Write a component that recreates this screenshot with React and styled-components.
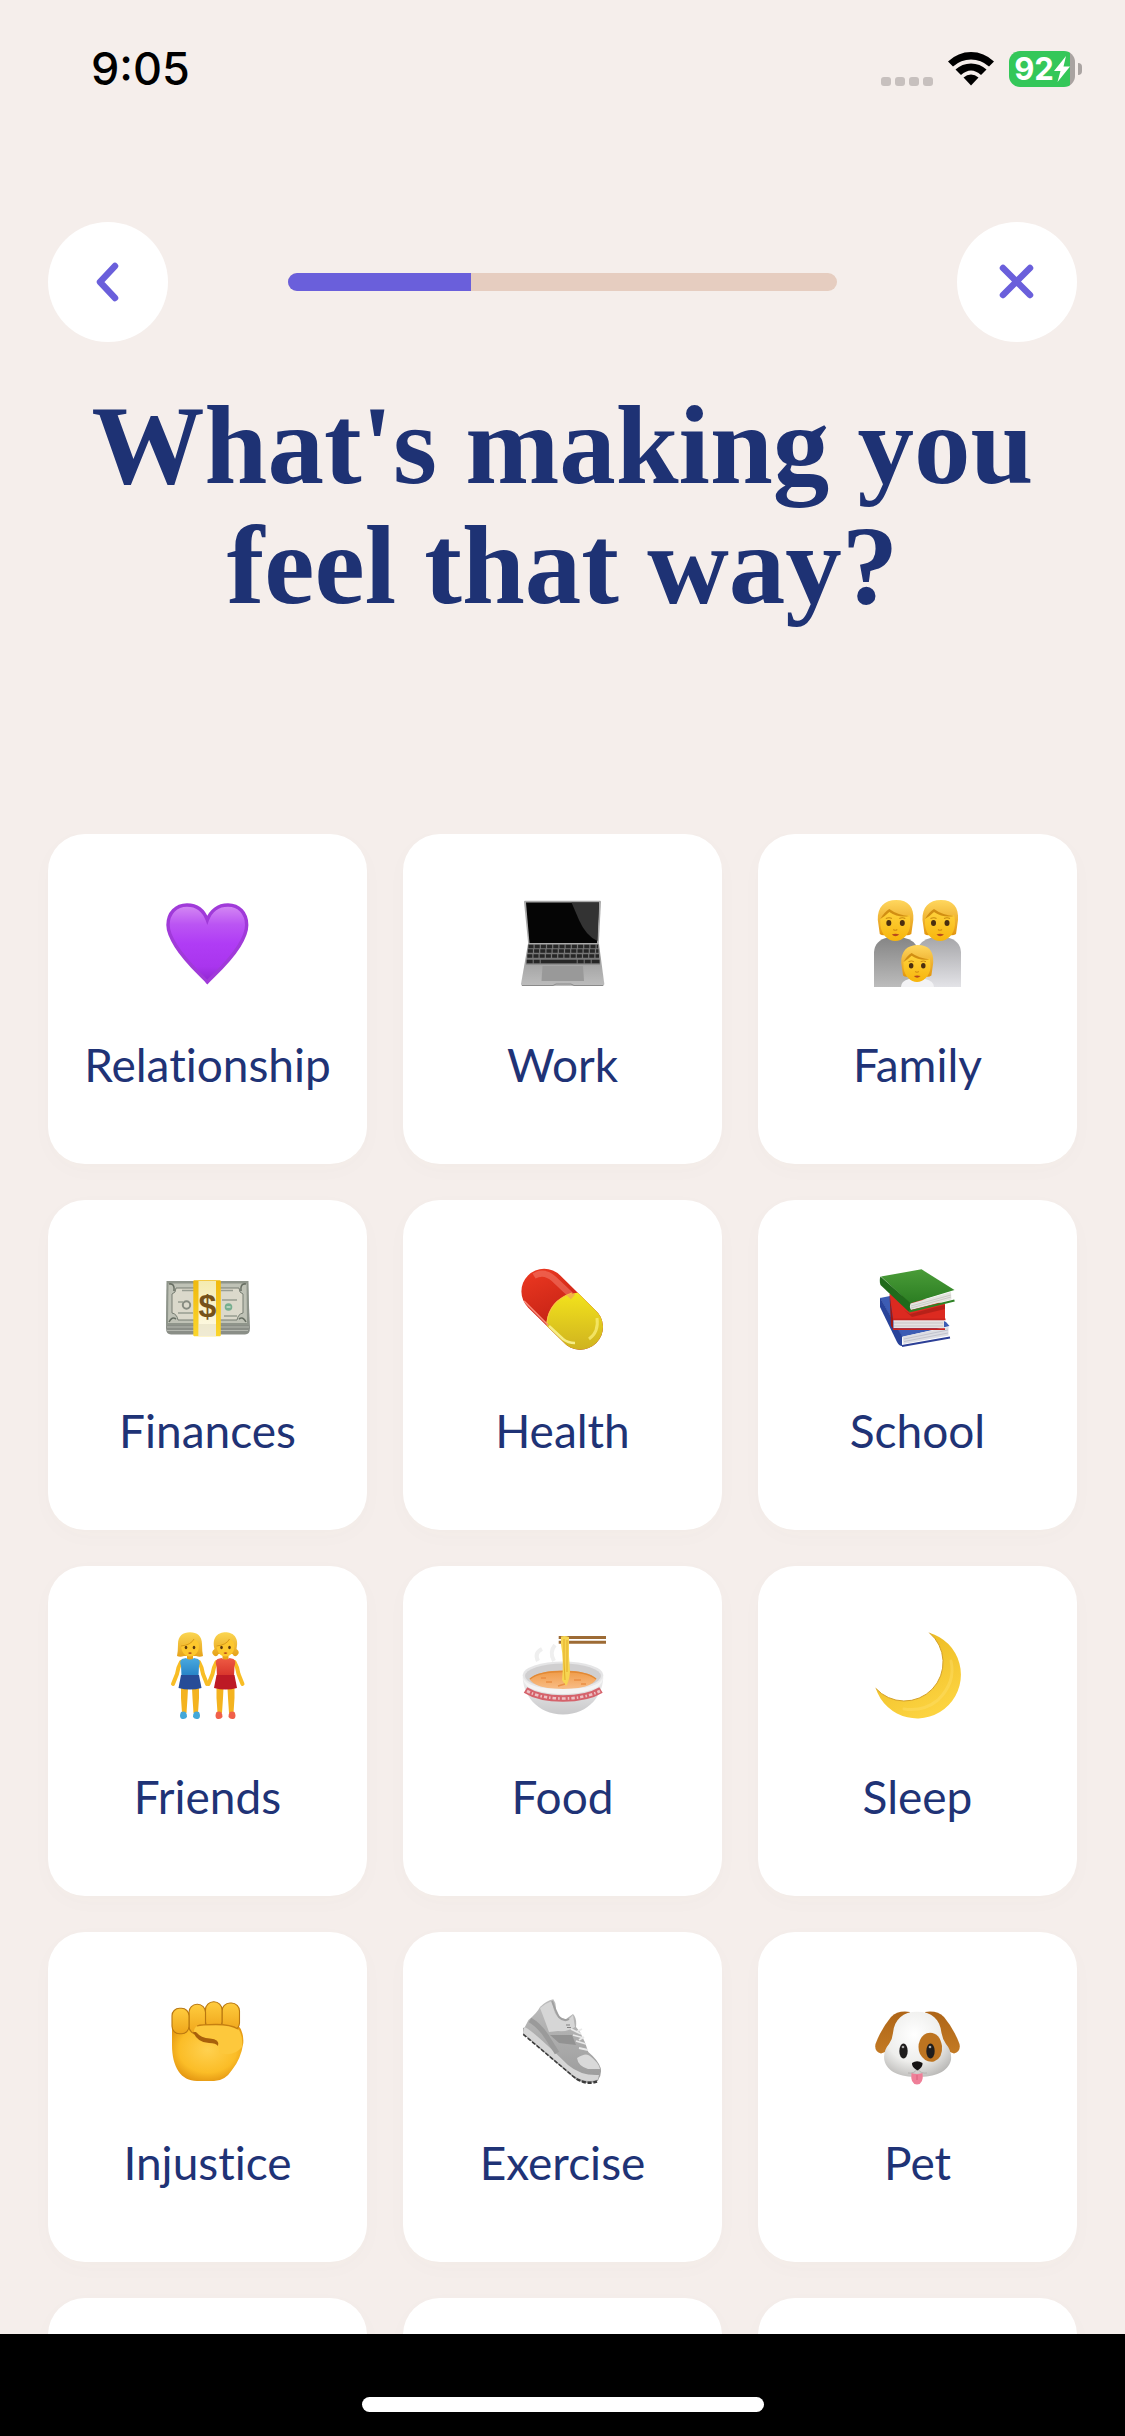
import React from "react";
import styled, { createGlobalStyle } from "styled-components";

const GlobalStyle = createGlobalStyle`
  * {
    box-sizing: border-box;
  }

  body {
    margin: 0;
    background: #f5eeeb;
  }
`;

const Screen = styled.div`
  display: flex;
  flex-direction: column;
  height: 100vh;
  background: #f5eeeb;
  color: #1f3376;
  font-family: Lato, sans-serif;
`;

const StatusBar = styled.div`
  display: flex;
  flex: none;
  align-items: center;
  justify-content: space-between;
  height: 138px;
  padding: 0 43px 0 91px;
  color: #000;
  font-family: Inter, sans-serif;
`;

const Time = styled.span`
  font-size: 45px;
  font-weight: 500;
  line-height: 54px;
`;

const StatusIcons = styled.div`
  display: flex;
  align-items: center;
  gap: 15px;
`;

const Dots = styled.div`
  display: flex;
  gap: 4px;
  padding-top: 24px;
`;

const Dot = styled.span`
  width: 10px;
  height: 9px;
  border-radius: 3px;
  background: #c7c0be;
`;

const Battery = styled.div`
  display: flex;
  align-items: center;
  gap: 3px;
`;

const BatteryBody = styled.div`
  display: flex;
  align-items: center;
  justify-content: center;
  width: 66px;
  height: 36px;
  border-radius: 11px;
  background: linear-gradient(90deg, #34c759 61px, #a9a3a1 61px);
  color: #fff;
  font-size: 31px;
  font-weight: 700;
  line-height: 36px;
`;

const BatteryCap = styled.span`
  width: 4px;
  height: 12px;
  border-radius: 0 4px 4px 0;
  background: #aaa4a2;
`;

const NavBar = styled.header`
  display: flex;
  flex: none;
  align-items: center;
  gap: 120px;
  padding: 84px 48px 0;
`;

const RoundButton = styled.button`
  display: flex;
  flex: none;
  align-items: center;
  justify-content: center;
  width: 120px;
  height: 120px;
  padding: 0;
  border: none;
  border-radius: 50%;
  background: #fff;
  color: #6a5fdb;
  cursor: pointer;
`;

const Track = styled.div`
  flex: 1;
  height: 18px;
  border-radius: 9px;
  background: #e6cdc0;
  overflow: hidden;
`;

const Fill = styled.div`
  height: 100%;
  background: #6a5fdb;
`;

const Title = styled.h1`
  flex: none;
  max-width: 1029px;
  margin: 43px auto 209px;
  padding: 0 24px;
  font-family: "Liberation Serif", serif;
  font-size: 113px;
  font-weight: 700;
  line-height: 120px;
  text-align: center;
  color: #1e3274;
`;

const Scroller = styled.main`
  flex: 1;
  min-height: 0;
  overflow-y: auto;
  scrollbar-width: none;
`;

const Grid = styled.div`
  display: grid;
  grid-template-columns: repeat(3, 1fr);
  gap: 36px;
  padding: 0 48px 36px;
`;

const Card = styled.button`
  display: flex;
  flex-direction: column;
  align-items: center;
  gap: 48px;
  min-height: 330px;
  padding: 66px 0 0;
  border: none;
  border-radius: 37px;
  background: #fff;
  box-shadow: 0 6px 24px rgba(120, 80, 50, 0.02);
  color: inherit;
  font-family: inherit;
  cursor: pointer;
`;

const Emoji = styled.svg`
  display: block;
  width: 87px;
  height: 87px;
`;

const Label = styled.span`
  font-size: 46px;
  line-height: 60px;
  font-variant-ligatures: none;
`;

const HomeBar = styled.footer`
  display: flex;
  flex: none;
  align-items: flex-end;
  justify-content: center;
  height: 102px;
  padding-bottom: 24px;
  background: #000;
`;

const HomeIndicator = styled.span`
  width: 402px;
  height: 15px;
  border-radius: 8px;
  background: #fff;
`;

function Gradient({ id, from, to, x2 = 0, y2 = 1 }) {
  return (
    <linearGradient id={id} x1="0" y1="0" x2={x2} y2={y2}>
      <stop offset="0" stopColor={from} />
      <stop offset="1" stopColor={to} />
    </linearGradient>
  );
}

function Heart() {
  return (
    <>
      <defs>
        <linearGradient id="heart" x1="0" y1="0" x2="0" y2="1">
          <stop offset="0" stopColor="#d58bf3" />
          <stop offset="0.25" stopColor="#bb55f3" />
          <stop offset="0.5" stopColor="#b03cf5" />
          <stop offset="0.8" stopColor="#a935ee" />
          <stop offset="1" stopColor="#8f27cf" />
        </linearGradient>
      </defs>
      <path
        d="M43.3 82C36 74 22 62 12 46C7 38 4 32 4 25C4 13 12 5 23 5C33 5 40 11 43.300 20C46.600 11 54 5 64 5C75 5 82.700 13 82.700 25C82.700 32 80 38 75 46C65 62 51 74 43.300 82Z"
        fill="url(#heart)"
        stroke="#a03ad9"
        strokeWidth="3.4"
      />
    </>
  );
}

const keyRows = [46.5, 51, 56, 61.5];

function Laptop() {
  return (
    <>
      <defs>
        <Gradient id="lapBase" from="#8f8f8f" to="#bdbdbd" />
      </defs>
      <path d="M6 .7H81Q82 .7 82 2L79.700 45H9.300L5 2Q5 .7 6 .7Z" fill="#aaa" />
      <path d="M7 2.500H80L78 43H10.500Z" fill="#050505" />
      <path d="M52.500 2.500H80L78.500 41Q67 36 60 20Z" fill="#333" />
      <path d="M9 44H80L85.300 84Q85.300 86 83.500 86H4Q2 86 2 84Z" fill="url(#lapBase)" />
      <path d="M9.500 44.500H79.500L81 64.500H7Z" fill="#777" />
      {keyRows.map((y, i) => (
        <path
          key={y}
          d={`M${9.500 - i * 0.6} ${y}H${79 + i * 0.5}`}
          stroke="#262626"
          strokeWidth="3.6"
          strokeDasharray={i === 3 ? "6 1 6 1 36 1" : "5 1.200"}
        />
      ))}
      <path d="M23.500 66H64L65 81H22.500Z" fill="#999" />
      <path d="M3 85.500H34L37 84H52L55 85.500H84" stroke="#8a8a8a" fill="none" />
    </>
  );
}

function Face({ x, y, s = 1 }) {
  return (
    <g transform={`translate(${x} ${y}) scale(${s})`}>
      <path d="M-17.500 20C-18 7 -11 0 1 0C13 0 19 7 18 20L16 34Q13 36 10 35H-10Q-13 36 -15.500 34Z" fill="url(#hair)" />
      <path d="M-15 19Q-12 14 -4 11Q8 17 14 15Q15 18 15 25C14 35 7 41 0 41C-7 41 -14 35 -15 25Z" fill="url(#skin)" />
      <path d="M-6 9Q2 15 14 16Q3 18 -6 12Q-10 16 -15 19Q-11 12 -6 9Z" fill="#d18e13" />
      <ellipse cx="-6.500" cy="23" rx="2.500" ry="3" fill="#4a2e10" />
      <ellipse cx="7" cy="23" rx="2.500" ry="3" fill="#4a2e10" />
      <path d="M-9.500 18.500Q-6 17 -3.500 18.500M4 18.500Q7 17 10 18.500" stroke="#c98a12" strokeWidth="1.100" fill="none" />
      <path d="M-2 29.500Q0 31 2 29.500" stroke="#d28b10" strokeWidth="1.200" fill="none" />
      <path d="M-3.500 34.500Q0 33 4 34.500Q0 38 -3.500 34.500Z" fill="#b84a1c" />
    </g>
  );
}

function Family() {
  return (
    <>
      <defs>
        <Gradient id="hair" from="#ffd75e" to="#e2950f" />
        <Gradient id="skin" from="#ffd23c" to="#f7b50c" />
        <Gradient id="bodyL" from="#858585" to="#bcbcbc" />
        <Gradient id="bodyR" from="#a6a6a9" to="#e3e3e7" />
      </defs>
      <path d="M0 87V52Q1 40 14 37.500H29Q42 40 44 50V87Z" fill="url(#bodyL)" />
      <path d="M43 87V50Q46 40 58 37.500H73Q86 40 87 52V87Z" fill="url(#bodyR)" />
      <Face x={21.3} y={0} />
      <Face x={66} y={0} />
      <path d="M27 87Q27 81 35 79H51Q60 81 60 87Z" fill="#f3f3f5" />
      <Face x={43} y={45} s={0.9} />
    </>
  );
}

function Money() {
  return (
    <>
      <defs>
        <Gradient id="band" from="#f4ebb0" to="#fffbea" />
        <Gradient id="gold" from="#f0b90d" to="#fbd52c" />
      </defs>
      <path d="M3 18H84L86 62Q86 68.500 81 68.500H7Q2 68.500 2 62Z" fill="#8a8e87" />
      <path d="M3 61H85M3 64.500H84" stroke="#b4b7af" strokeWidth="1.100" />
      <path d="M2.500 15H84.500L85 59H2Z" fill="#8f958b" />
      <path d="M4.500 17.500H82.500L83 57H4Z" fill="#bfc2b6" />
      <path d="M12 22H75Q75 27 79 28V47Q74 48 73 54H14Q13 48 8 47V28Q12 27 12 22Z" fill="#dbd9cb" stroke="#777d72" />
      <path d="M5 18Q11 17 10 25M82 18Q76 17 77 25M5 56Q8 50 12 53M82 56Q79 50 75 53" stroke="#686f64" strokeWidth="1.600" fill="none" />
      <path d="M18 24.500H30M57 24.500H69M14 36H19M58 34H73M14 47H29M60 50H73" stroke="#989d91" strokeWidth="1.500" />
      <circle cx="22.500" cy="39" r="3.700" fill="none" stroke="#868b80" strokeWidth="2" />
      <circle cx="64.500" cy="41" r="3.800" fill="#76ae8f" />
      <path d="M62.500 41H66.500" stroke="#c8dccb" strokeWidth="1.500" />
      <rect x="29.300" y="14.300" width="27.500" height="56" rx="1" fill="url(#gold)" />
      <rect x="34.500" y="15" width="17.500" height="55" fill="url(#band)" />
      <path d="M34.500 58H52V70H34.500Z" fill="#dfd9bd" opacity=".5" />
      <text x="43.500" y="51" textAnchor="middle" fontFamily="Liberation Sans, sans-serif" fontSize="32" fontWeight="700" fill="#75521a">
        $
      </text>
    </>
  );
}

function Pill() {
  return (
    <>
      <defs>
        <Gradient id="pillRed" from="#ef3a22" to="#b51910" x2={0.4} />
        <Gradient id="pillYellow" from="#f3e31c" to="#cdb020" />
        <clipPath id="pillShape">
          <path d="M9.300 41.700A22.700 22.700 0 1 1 41.300 9.500L76 43.700A22.700 22.700 0 1 1 44 75.700Z" />
        </clipPath>
      </defs>
      <g clipPath="url(#pillShape)">
        <path d="M0 0H87V87H0Z" fill="url(#pillRed)" />
        <path d="M27.500 60C27 44 39 27 62 26.500L87 40V87H40Z" fill="url(#pillYellow)" />
        <path d="M15 10Q25 4 35 13L54 31" stroke="#f68373" strokeWidth="6" fill="none" opacity=".5" />
        <path d="M5 35L29 59" stroke="#fa8e7d" strokeWidth="1.600" />
        <path d="M30 60L44 73Q49 77 56 77" stroke="#f6ed87" strokeWidth="2.500" fill="none" />
        <path d="M78 52Q80 66 70 73" stroke="#f7eb73" strokeWidth="3" fill="none" opacity=".8" />
        <path d="M28 57Q30 35 53 27" stroke="#f9c443" strokeWidth="1.200" fill="none" />
      </g>
    </>
  );
}

function Books() {
  return (
    <>
      <defs>
        <Gradient id="bookGreen" from="#4a9c38" to="#2b7d22" />
      </defs>
      <path d="M6 32L16 30L72 56L75.500 60L28 71Z" fill="#3c5cb4" />
      <path d="M6 31.500L28 70V80Q25 80 23 76L6 41Z" fill="#28439a" />
      <path d="M28.500 70.500L74.500 61V69.500L29.500 78Z" fill="#dcdde3" />
      <path d="M28 80L76 71.500" stroke="#2c3f96" strokeWidth="2" />
      <path d="M30 73L74 64M30 75.500L74 67" stroke="#b5b7c4" strokeWidth=".7" />
      <path d="M15.500 28L60 35L71 38V53H19Z" fill="#dc2a20" />
      <path d="M15.500 28L19 53V63L17 60Z" fill="#9d1813" />
      <path d="M19.500 54H70V62H19.500Z" fill="#e5e2e2" />
      <path d="M19 63.200H71M19 53.300H71.500" stroke="#c9231d" strokeWidth="1.700" />
      <path d="M20 57H69M20 60H69" stroke="#bfbaba" strokeWidth=".7" />
      <path d="M30 44L36 48L62 41L71 39V43L38 51Z" fill="#9f1c16" opacity=".6" />
      <path d="M7 10.500L47.500 3.300L80.500 24L36 37.500Z" fill="url(#bookGreen)" />
      <path d="M6.500 10.500Q5 14 6.500 19L34.500 45.500L37 45V37.500Z" fill="#206a1b" />
      <path d="M36.500 37.500L77 26L77.500 33.500L37 44Q35 41 36.500 37.500Z" fill="#e4e4df" />
      <path d="M35 45.500L80.500 34.500" stroke="#2e8225" strokeWidth="2" />
      <path d="M37 40L77 29M37 42L77 31" stroke="#bfc0ba" strokeWidth=".7" />
    </>
  );
}

function Girl({ x, top, skirt, shoe, bob }) {
  return (
    <g transform={`translate(${x} 0)`}>
      <path d="M-9 30Q-12 35 -13 42L-17 52M9 30Q12 35 13 42L17 52" stroke="#f8bd25" strokeWidth="4" strokeLinecap="round" fill="none" />
      <path d="M-9 56H-2L-2.500 66L-3.500 81H-8L-9 66ZM2 56H9L9 66L8 81H3.500L2.500 66Z" fill="#f4b31f" />
      <path d="M-3 21H3V28H-3Z" fill="#e9a316" />
      <path d="M-8 27L-4 26Q0 29 4 26L8 27Q11 29 9 34L8.500 44H-8.500L-9 34Q-11 29 -8 27Z" fill={top} />
      <path d="M-9 43H9L11.500 56Q0 59 -11.500 56Z" fill={skirt} />
      <path d="M-9 80Q-3 78 -3 85Q-5 88 -9 86.500Q-11 84 -9 80ZM9 80Q3 78 3 85Q5 88 9 86.500Q11 84 9 80Z" fill={shoe} />
      {bob ? (
        <path d="M-13 24Q-12 19 -12 12C-12 4 -7 .3 0 .3S12 4 12 12Q12 19 13 24Q10 25.500 6 24H-6Q-10 25.500 -13 24Z" fill="url(#girlHair)" />
      ) : (
        <path d="M-11 17C-14 5 -7 .3 0 .3S14 5 11 17Q15 20 12 23Q9 26 7 22L-7 22Q-9 26 -12 23Q-15 20 -11 17Z" fill="url(#girlHair)" />
      )}
      <path d="M-9 13Q0 12 4 7Q9 9 9 14C9 20 5 24.500 0 24.500S-9 20 -9 13Z" fill="#fdc72d" />
      <ellipse cx="-4" cy="15.500" rx="1.300" ry="1.800" fill="#5c390f" />
      <ellipse cx="4" cy="15.500" rx="1.300" ry="1.800" fill="#5c390f" />
      <path d="M-2 21Q0 19.500 2 21Q0 23 -2 21Z" fill="#b54818" />
      <path d="M-9 14Q1 13 4 7" stroke="#c98a18" strokeWidth=".8" fill="none" />
    </g>
  );
}

function Friends() {
  return (
    <>
      <defs>
        <Gradient id="girlHair" from="#fbd652" to="#e6a21a" />
        <Gradient id="blueTop" from="#4aa9de" to="#2683c7" />
        <Gradient id="redTop" from="#ee5b43" to="#d8342b" />
      </defs>
      <Girl x={26} top="url(#blueTop)" skirt="#274c97" shoe="#43a7d8" bob />
      <Girl x={61.5} top="url(#redTop)" skirt="#bd1a25" shoe="#f0604a" />
    </>
  );
}

function Bowl() {
  return (
    <>
      <defs>
        <Gradient id="bowl" from="#f1f1f1" to="#c9c9cb" />
        <Gradient id="soup" from="#f09a45" to="#f8bd87" />
      </defs>
      <path d="M19 29Q15 21 23 17M35 29Q30 20 36 13" stroke="#efefef" strokeWidth="4" fill="none" />
      <path d="M3.700 43C3 62 18 82.500 44 82.500S85 62 84.300 43Z" fill="url(#bowl)" />
      <ellipse cx="44" cy="43" rx="40.300" ry="13.500" fill="#e5e5e6" />
      <ellipse cx="44" cy="44" rx="38" ry="12.500" fill="#d0cfd0" />
      <path d="M10.500 47Q20 38.500 44 38.500T77.500 47Q72 57 44 57T10.500 47Z" fill="url(#soup)" />
      <path d="M11 47Q20 39.500 44 39.500T77 47" stroke="#e18935" strokeWidth="1.600" fill="none" />
      <path d="M4 46Q9 57 44 57T84 46Q83 55 72 58Q60 62 44 62T16 58Q5 55 4 46Z" fill="#f4f4f4" />
      <path d="M6.500 58Q20 66.500 44 66.500T82 58" stroke="#d5626b" strokeWidth="6.500" fill="none" />
      <path d="M8 59Q22 66.500 44 66.500T81 59" stroke="#ecc0c3" strokeWidth="2.600" strokeDasharray="3.500 2 1.500 2" fill="none" />
      <path d="M39.700 4H87V7H39.700ZM39.700 8.700H87V11.700H39.700Z" fill="#9d6b35" />
      <path d="M42 4.500Q46 3.500 50 5V24L51 40Q50 50 47 54L43 48Q45 30 42 12Z" fill="#f7d551" />
      <path d="M45 7V30L46 48M48 8V40" stroke="#e3ad2b" strokeWidth="1" fill="none" />
      <path d="M27 50H33M55 48H62M39 54L46 52M62 52H67M22 46H27" stroke="#ea8f43" strokeWidth="1.500" />
    </>
  );
}

function Moon() {
  return (
    <>
      <defs>
        <Gradient id="moon" from="#e8b51c" to="#fcd340" x2={0.5} />
      </defs>
      <path d="M55.300 .7A43.700 43.700 0 1 1 1.700 56.300A38.700 38.700 0 1 0 55.300 .7Z" fill="url(#moon)" />
      <path d="M1.700 56.300A38.700 38.700 0 1 0 55.300 .7" stroke="#d3a02a" fill="none" />
      <path d="M77 29Q82 50 64 68Q49 80 30 77" stroke="#ffe275" strokeWidth="3" fill="none" opacity=".35" strokeLinecap="round" />
    </>
  );
}

function Fist() {
  return (
    <>
      <defs>
        <radialGradient id="fist" cx=".5" cy=".45" r=".62">
          <stop offset="0" stopColor="#ffd150" />
          <stop offset="0.650" stopColor="#fbbd27" />
          <stop offset="1" stopColor="#df8f0d" />
        </radialGradient>
        <Gradient id="finger" from="#ffcc3e" to="#efa51a" />
      </defs>
      <path d="M8 28L26 26H73Q80 33 79.300 45Q77 61 68 72Q61 83 50 83H33C17 83 8 69 8 47Z" fill="url(#fist)" />
      <g fill="url(#finger)" stroke="#b97710" strokeWidth="1.100">
        <rect x="58" y="5" width="17.500" height="28" rx="8" />
        <rect x="41.500" y="3.700" width="16.500" height="28" rx="8" />
        <rect x="25" y="6.300" width="16.500" height="30" rx="8" />
        <rect x="8" y="10.300" width="17" height="25.500" rx="7.500" />
      </g>
      <path d="M33 28Q37 26.500 52 26.500Q69 26 75 32Q79 38 78 49Q70 59 55 55Q57 45 49 42Q40 44 33 38Q27 32 33 28Z" fill="#fdc83c" />
      <path d="M74 31Q67 26.500 52 26.500Q37 26.500 33 28" stroke="#c67f10" strokeWidth="1.300" fill="none" />
      <path d="M29 34Q34 45 45 45Q52 45 54 48Q56 41 46 40.500Q37 40 32 34Z" fill="#a8600b" />
    </>
  );
}

function Shoe() {
  return (
    <>
      <defs>
        <Gradient id="shoe" from="#bdbdbd" to="#9c9c9c" />
      </defs>
      <path d="M4 30L4 36L56 81Q68 88 79 83L80 78L60 72L10 28Z" fill="#9a9a9a" />
      <path d="M4.500 36L58 81Q68 87 78 83.500" stroke="#3b3b3b" strokeWidth="2.400" strokeDasharray="4 1.800" fill="none" />
      <path d="M4.300 32L9.500 22Q18 15 21 9Q27 3 34.300 1.300Q38 6 36.500 13Q41 22 47 21L54 16Q58 20 57 29L61 34Q66 43 69.300 54Q79 62 81.700 70Q83 77 79 82Q65 82 51 72Z" fill="url(#shoe)" />
      <path d="M5 29Q10 29 49 67Q62 78 80 77L79 81.500Q67 86 55 78L4 35Z" fill="#d6d6d6" />
      <path d="M21 10Q27 5 33 3Q34 10 36 15Q41 24 50 21L54 17L56 29Q49 34 39 33L30 34Q25 20 21 10Z" fill="#d6d6d6" />
      <path d="M33 3Q37 14 40 19Q45 24 50 21" stroke="#a0a0a0" strokeWidth="2" fill="none" />
      <path d="M11 22Q20 27 28 39L38 55" stroke="#9a9a9a" strokeWidth="5" fill="none" />
      <path d="M31 37L53 37L57 47L40 45Z" fill="#929292" />
      <path d="M58 60Q67 54 71 58Q80 65 81 71L69 71Q59 68 58 60Z" fill="#d9d9d9" />
      <path d="M52 31L62 36M54 37L65 40M57 43L67 46M60 50L69 52M57 34L63 31M60 42L65 39" stroke="#e9e9e9" strokeWidth="1.800" />
      <path d="M47 27H51M48 29.500H52" stroke="#818181" />
    </>
  );
}

function Dog() {
  return (
    <>
      <defs>
        <Gradient id="dogEar" from="#ae6517" to="#c37a24" />
        <radialGradient id="dogHead" cx=".45" cy=".35" r=".7">
          <stop offset="0" stopColor="#fff" />
          <stop offset="0.6" stopColor="#eeeeec" />
          <stop offset="1" stopColor="#bab9b7" />
        </radialGradient>
      </defs>
      <path d="M36 14Q24 12 17 19Q7 31 1.500 46Q0 54 7 55.500Q14 54 20 46L30 30Z" fill="url(#dogEar)" />
      <path d="M51 14Q63 12 70 19Q80 31 85.500 46Q87 54 80 55.500Q73 54 67 46L57 30Z" fill="url(#dogEar)" />
      <path d="M43 13.700C58 13.700 66 21 67.500 35Q68.500 41 72 46Q78 53 77 62C74 74 61 79 43.500 79S13 74 10.300 62Q9 53 15 46Q18.500 41 19 35C20.500 21 29 13.700 43 13.700Z" fill="url(#dogHead)" />
      <path d="M56 34.700Q66 35 68 48Q69 60 60 63.500Q51 65 46 56Q43 49 46 42Q49 35 56 34.700Z" fill="#bd7420" />
      <ellipse cx="29.500" cy="53" rx="4.200" ry="7.500" fill="#1f1d1d" />
      <ellipse cx="56.500" cy="53" rx="4.200" ry="7.500" fill="#1f1d1d" />
      <circle cx="29" cy="49" r="1.300" fill="#aaa" />
      <circle cx="56" cy="49" r="1.300" fill="#aaa" />
      <path d="M34 75Q40 76 43.500 71Q47 76 53 75" stroke="#b5b2b0" fill="none" />
      <path d="M37.500 75Q43 77 48.500 75Q50 86 43 86.500Q36 86 37.500 75Z" fill="#ef7f98" />
      <path d="M43 77V82" stroke="#d8607d" />
      <path d="M38 65Q43 61.500 48.500 65Q49 69 43.500 72.500Q37.500 69 38 65Z" fill="#151313" />
    </>
  );
}

const reasons = [
  { label: "Relationship", Art: Heart },
  { label: "Work", Art: Laptop },
  { label: "Family", Art: Family },
  { label: "Finances", Art: Money },
  { label: "Health", Art: Pill },
  { label: "School", Art: Books },
  { label: "Friends", Art: Friends },
  { label: "Food", Art: Bowl },
  { label: "Sleep", Art: Moon },
  { label: "Injustice", Art: Fist },
  { label: "Exercise", Art: Shoe },
  { label: "Pet", Art: Dog },
];

function WifiIcon() {
  return (
    <svg width="46" height="34" viewBox="0 0 46 34" aria-hidden="true">
      <path d="M0 9.500Q10 0 23 0T46 9.500L41 14.500Q33 7.500 23 7.500T5 14.500Z" />
      <path d="M7.500 17.500Q14 11.500 23 11.500T38.500 17.500L33 23Q28 18.500 23 18.500T13 23Z" />
      <path d="M15.500 25.500Q19 22.500 23 22.500T30.500 25.500L23 33.500Z" />
    </svg>
  );
}

function BoltIcon() {
  return (
    <svg width="16" height="26" viewBox="0 0 16 26" aria-hidden="true">
      <path d="M12 0L0 15H6.500L3.500 26L16 10.500H9.500Z" fill="#fff" />
    </svg>
  );
}

function App() {
  const progress = 100 / 3;

  return (
    <>
      <GlobalStyle />
      <Screen>
        <StatusBar>
          <Time>9:05</Time>
          <StatusIcons>
            <Dots>
              <Dot />
              <Dot />
              <Dot />
              <Dot />
            </Dots>
            <WifiIcon />
            <Battery>
              <BatteryBody>
                92
                <BoltIcon />
              </BatteryBody>
              <BatteryCap />
            </Battery>
          </StatusIcons>
        </StatusBar>

        <NavBar>
          <RoundButton type="button" aria-label="Back">
            <svg width="24" height="40" viewBox="0 0 24 40" fill="none" stroke="currentColor" strokeWidth="6.500" strokeLinecap="round" strokeLinejoin="round">
              <path d="M19 4L4 20L19 36" />
            </svg>
          </RoundButton>
          <Track role="progressbar" aria-label="Progress" aria-valuenow={33} aria-valuemin={0} aria-valuemax={100}>
            <Fill style={{ width: `${progress}%` }} />
          </Track>
          <RoundButton type="button" aria-label="Close">
            <svg width="36" height="36" viewBox="0 0 36 36" fill="none" stroke="currentColor" strokeWidth="6.500" strokeLinecap="round">
              <path d="M4 4L31 31M31 4L4 31" />
            </svg>
          </RoundButton>
        </NavBar>

        <Title>What's making you feel that way?</Title>

        <Scroller>
          <Grid>
            {reasons.map(({ label, Art }) => (
              <Card type="button" key={label}>
                <Emoji viewBox="0 0 87 87" aria-hidden="true">
                  <Art />
                </Emoji>
                <Label>{label}</Label>
              </Card>
            ))}
            <Card as="div" />
            <Card as="div" />
            <Card as="div" />
          </Grid>
        </Scroller>

        <HomeBar>
          <HomeIndicator />
        </HomeBar>
      </Screen>
    </>
  );
}

export default App;
